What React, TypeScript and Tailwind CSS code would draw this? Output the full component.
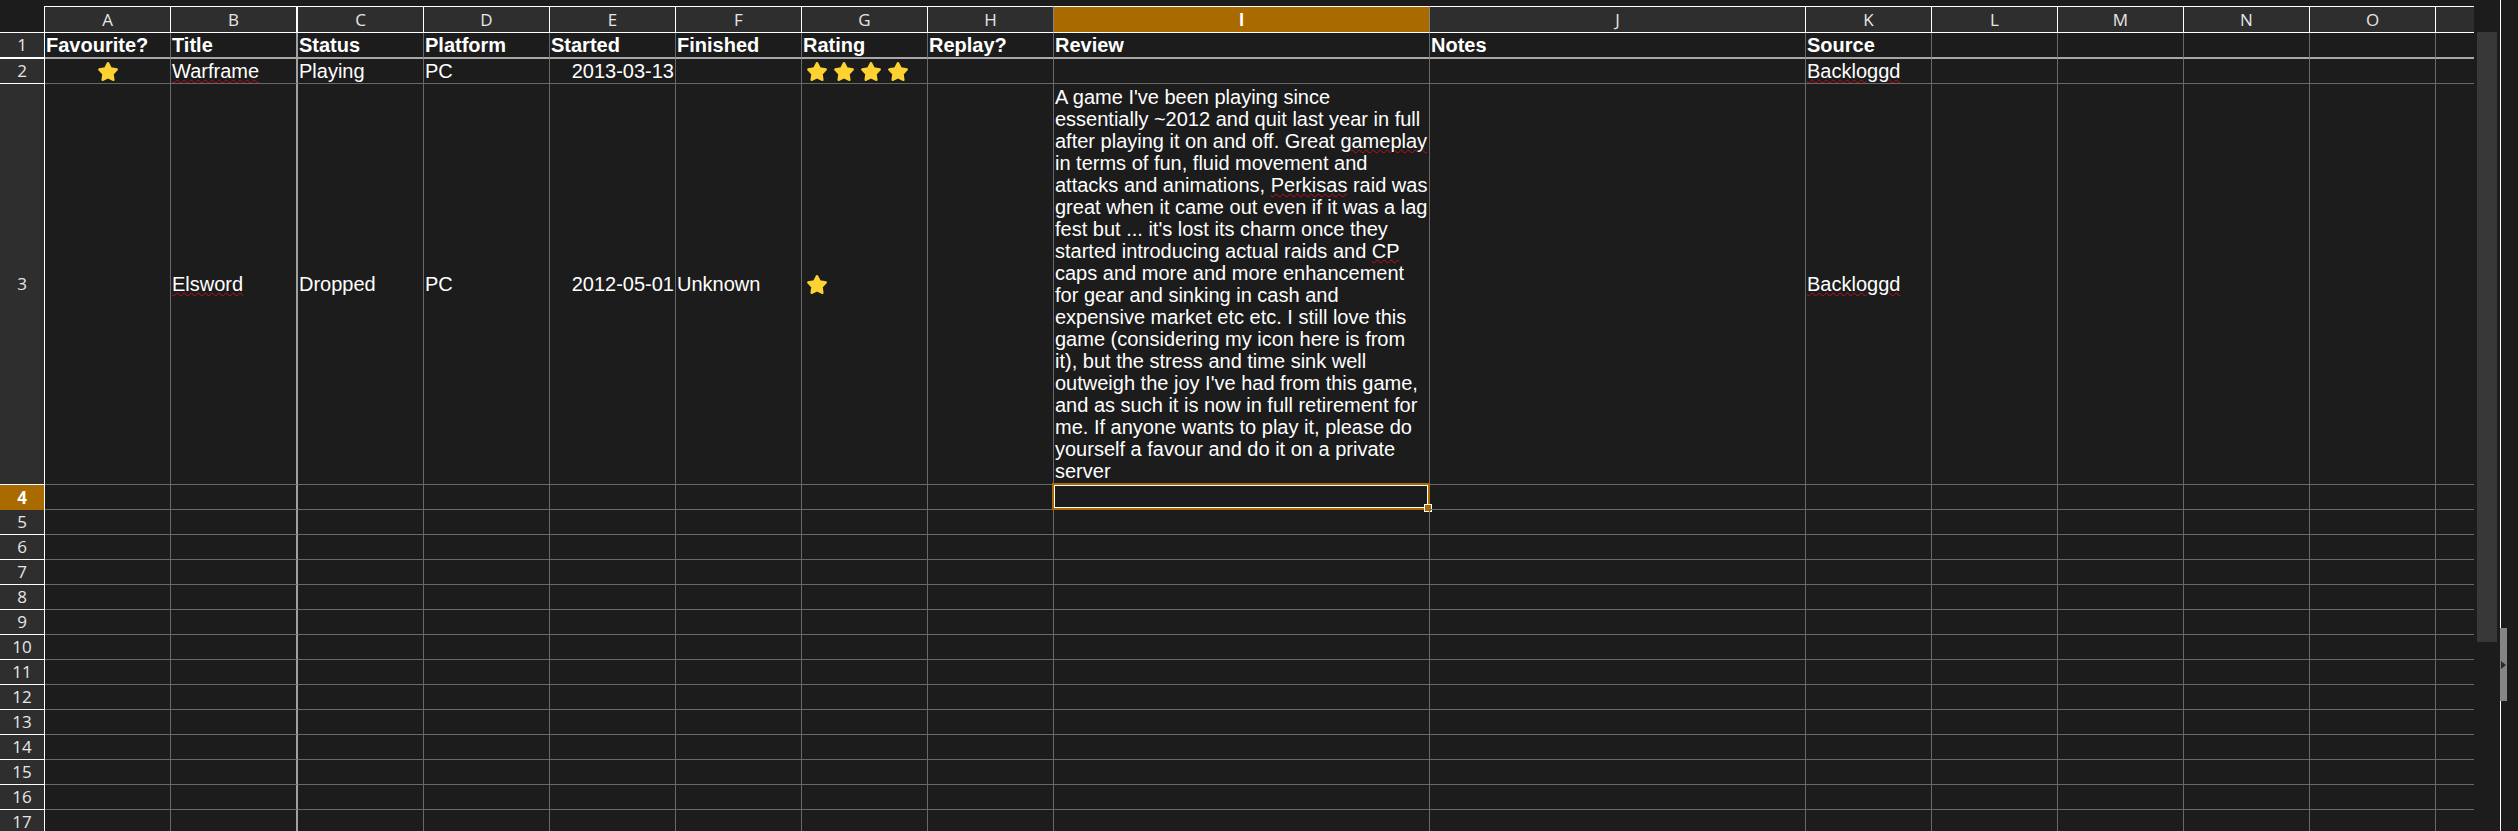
const columns = [
  { letter: 'A', w: 'w-[126px]' },
  { letter: 'B', w: 'w-[127px]' },
  { letter: 'C', w: 'w-[126px]' },
  { letter: 'D', w: 'w-[126px]' },
  { letter: 'E', w: 'w-[126px]' },
  { letter: 'F', w: 'w-[126px]' },
  { letter: 'G', w: 'w-[126px]' },
  { letter: 'H', w: 'w-[126px]' },
  { letter: 'I', w: 'w-[376px]' },
  { letter: 'J', w: 'w-[376px]' },
  { letter: 'K', w: 'w-[126px]' },
  { letter: 'L', w: 'w-[126px]' },
  { letter: 'M', w: 'w-[126px]' },
  { letter: 'N', w: 'w-[126px]' },
  { letter: 'O', w: 'w-[126px]' },
  { letter: '', w: 'w-[38px]' },
]

function Star() {
  return (
    <svg viewBox="1.4 1 17.2 16.5" className="w-[20px] h-[19px] shrink-0">
      <polygon
        points="10,2 12.5,6.6 17.6,7.5 14,11.3 14.7,16.5 10,14.2 5.3,16.5 6,11.3 2.4,7.5 7.5,6.6"
        fill="#fdd231"
        stroke="#fdd231"
        strokeWidth={2}
        strokeLinejoin="round"
      />
    </svg>
  )
}

function Typo({ children }: { children: string }) {
  return <span className="underline decoration-wavy decoration-[#c0101a] decoration-1 underline-offset-1">{children}</span>
}

// one row of the sheet; cells holds content by column letter
function Row({
  num,
  height,
  cells = {},
  selected,
  frozen,
}: {
  num: number
  height: string
  cells?: Record<string, React.ReactNode>
  selected?: boolean
  frozen?: boolean
}) {
  return (
    <div className={`flex ${height}`}>
      <div
        className={`w-[45px] shrink-0 flex items-center justify-center border-r border-r-white font-['Open_Sans',sans-serif] text-[17px] ${
          selected ? 'bg-[#a96a00] font-bold text-white' : 'bg-[#2e2e2e] text-[#e6e6e6] border-b border-b-white'
        } ${frozen ? 'border-b-2' : ''}`}
      >
        {num}
      </div>
      {columns.map((col, i) => (
        <div
          key={col.letter}
          className={`${col.w} shrink-0 relative flex items-center pl-[1px] text-white ${frozen ? 'border-b-2 border-b-[#a8a8a8]' : 'border-b border-b-[#686868]'} ${
            col.letter === 'B' ? 'border-r-2 border-r-[#a0a0a0]' : i < 15 ? 'border-r border-r-[#686868]' : ''
          }`}
        >
          {cells[col.letter]}
          {selected && col.letter === 'I' && (
            <div className="absolute -left-[2px] -top-[2px] -right-[1px] -bottom-[1px] border-2 border-[#a96a00]">
              <div className="w-full h-full border border-white" />
              <div className="absolute -right-[4px] -bottom-[4px] w-[8px] h-[8px] bg-[#a96a00] border border-white" />
            </div>
          )}
        </div>
      ))}
    </div>
  )
}

export default function App() {
  const review = (
    <p className="w-full">
      A game I've been playing since essentially ~2012 and quit last year in full after playing it on and off. Great{' '}
      <Typo>gameplay</Typo> in terms of fun, fluid movement and attacks and animations, <Typo>Perkisas</Typo> raid was
      great when it came out even if it was a lag fest but ... it's lost its charm once they started introducing actual
      raids and <Typo>CP</Typo> caps and more and more enhancement for gear and sinking in cash and expensive market etc
      etc. I still love this game (considering my icon here is from it), but the stress and time sink well outweigh the
      joy I've had from this game, and as such it is now in full retirement for me. If anyone wants to play it, please
      do yourself a favour and do it on a private server
    </p>
  )

  return (
    <div className="w-[2518px] h-[831px] overflow-hidden flex bg-[#1c1c1c] font-['Liberation_Sans',sans-serif] text-[20px] leading-[22px]">
      <div className="w-[2474px] shrink-0 pt-[6px]">
        {/* column letters */}
        <div className="flex h-[27px]">
          <div className="w-[45px] shrink-0 border-r border-r-white border-b border-b-white" />
          {columns.map((col, i) => (
            <div
              key={col.letter}
              className={`${col.w} shrink-0 flex items-center justify-center font-['Open_Sans',sans-serif] text-[17px] border-t border-t-white border-b border-b-white ${
                col.letter === 'I' ? 'bg-[#a96a00] font-bold text-white' : 'bg-[#2e2e2e] text-[#e6e6e6]'
              } ${
                col.letter === 'B'
                  ? 'border-r-2 border-r-white'
                  : col.letter === 'H' || col.letter === 'I'
                    ? 'border-r border-r-[#858585]'
                    : i < 15
                      ? 'border-r border-r-white'
                      : ''
              }`}
            >
              {col.letter}
            </div>
          ))}
        </div>

        <Row
          num={1}
          height="h-[26px]"
          frozen
          cells={{
            A: <b>Favourite?</b>,
            B: <b>Title</b>,
            C: <b>Status</b>,
            D: <b>Platform</b>,
            E: <b>Started</b>,
            F: <b>Finished</b>,
            G: <b>Rating</b>,
            H: <b>Replay?</b>,
            I: <b>Review</b>,
            J: <b>Notes</b>,
            K: <b>Source</b>,
          }}
        />
        <Row
          num={2}
          height="h-[25px]"
          cells={{
            A: (
              <div className="w-full flex justify-center">
                <Star />
              </div>
            ),
            B: <Typo>Warframe</Typo>,
            C: 'Playing',
            D: 'PC',
            E: <span className="w-full text-right pr-[1px]">2013-03-13</span>,
            G: (
              <div className="flex gap-[7px] pl-[4px]">
                <Star />
                <Star />
                <Star />
                <Star />
              </div>
            ),
            K: <Typo>Backloggd</Typo>,
          }}
        />
        <Row
          num={3}
          height="h-[401px]"
          cells={{
            B: <Typo>Elsword</Typo>,
            C: 'Dropped',
            D: 'PC',
            E: <span className="w-full text-right pr-[1px]">2012-05-01</span>,
            F: 'Unknown',
            G: (
              <div className="pl-[4px]">
                <Star />
              </div>
            ),
            I: review,
            K: <Typo>Backloggd</Typo>,
          }}
        />
        <Row num={4} height="h-[25px]" selected />
        {[5, 6, 7, 8, 9, 10, 11, 12, 13, 14, 15, 16, 17].map((n) => (
          <Row key={n} num={n} height="h-[25px]" />
        ))}
      </div>

      {/* vertical scrollbar */}
      <div className="w-[26px] shrink-0 pl-[3px] pt-[32px]">
        <div className="w-[20px] h-[610px] bg-[#383838]" />
      </div>

      {/* sidebar splitter */}
      <div className="w-[18px] shrink-0 relative border-l border-l-white">
        <div className="absolute -left-[1px] top-[628px] w-[7px] h-[73px] bg-[#858585] flex items-center justify-center">
          <svg viewBox="0 0 6 8" className="w-[6px] h-[8px]">
            <polygon points="0,0 5,4 0,8" fill="#2a2a2a" />
          </svg>
        </div>
      </div>
    </div>
  )
}
